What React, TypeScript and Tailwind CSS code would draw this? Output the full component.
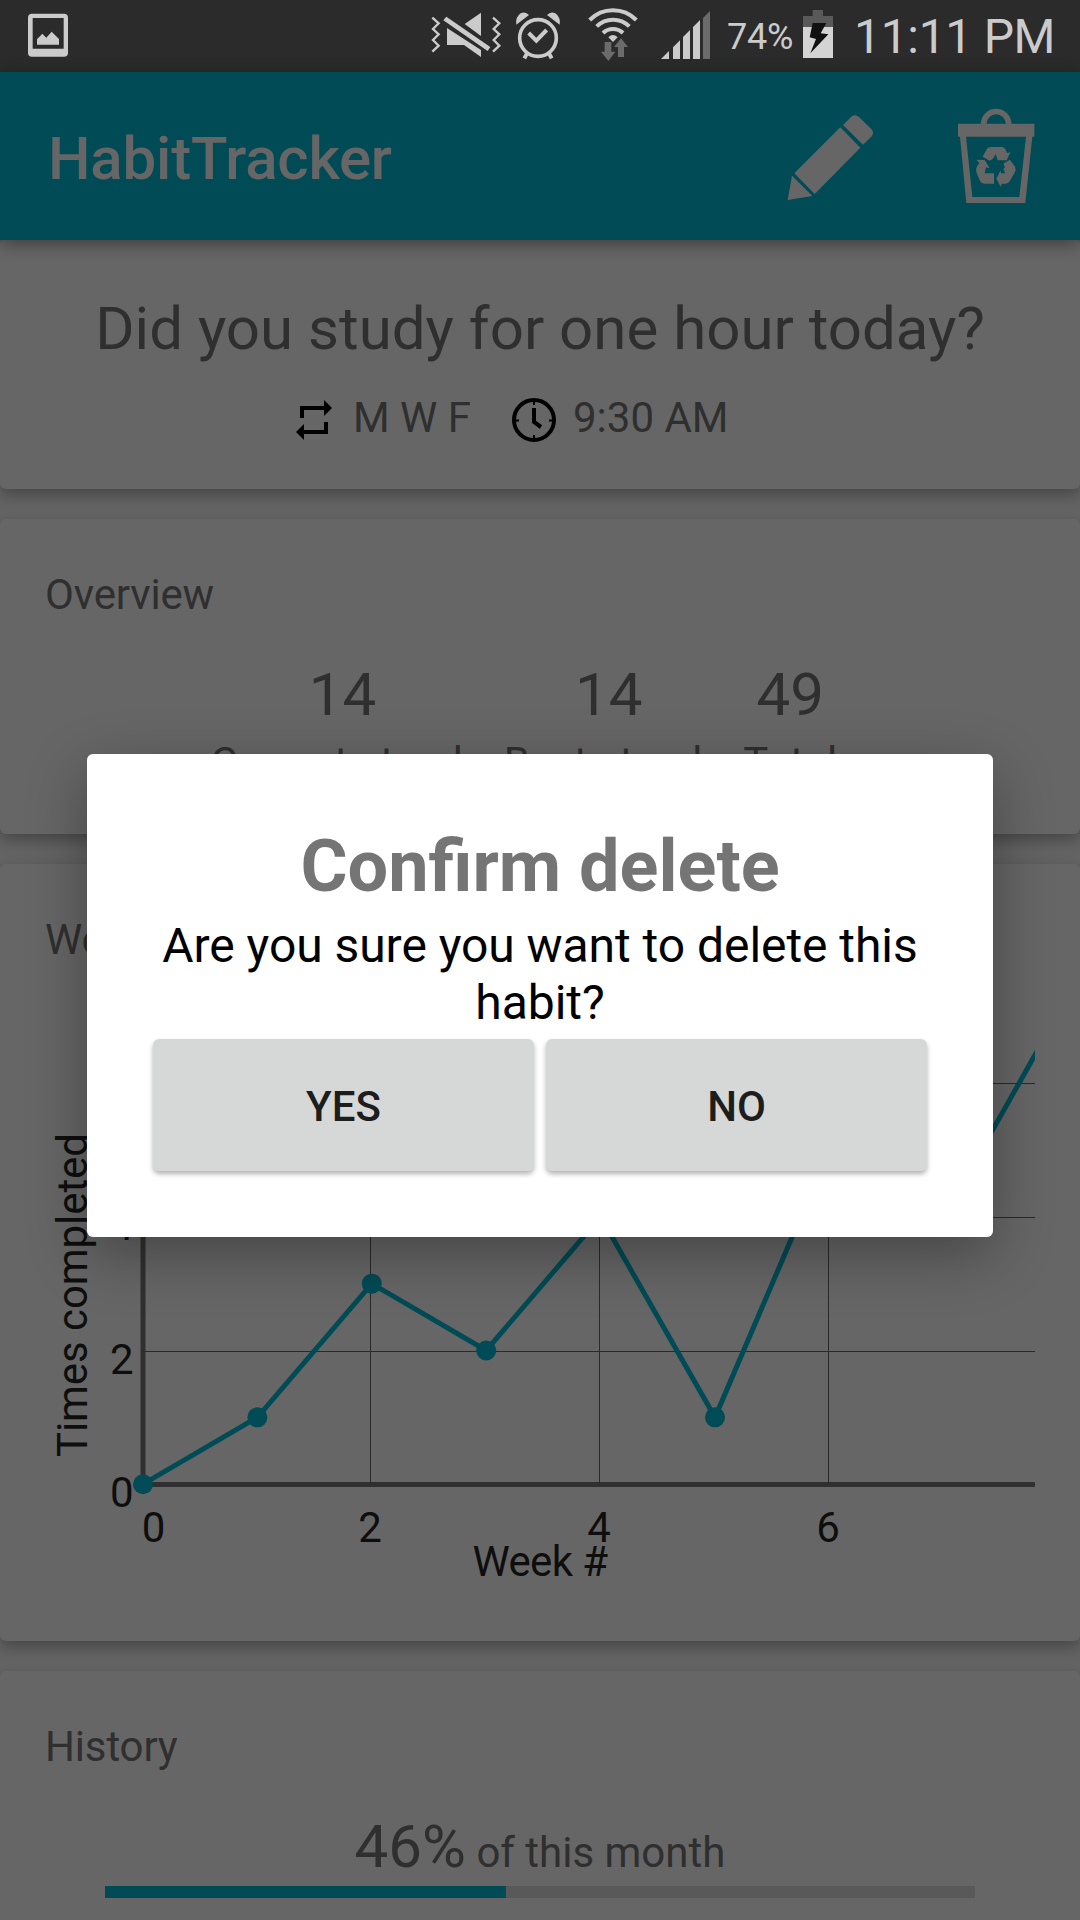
import type { ReactNode } from "react";

function StatusBar() {
  return (
    <div className="flex h-[72px] shrink-0 bg-[#2b2b2b] text-[#cbcbcb]">
      <svg className="ml-7 h-[72px] w-10 shrink-0" viewBox="84 0 120 216" fill="#cbcbcb">
        <path
          fillRule="evenodd"
          d="M96 41H192Q204 41 204 53V158Q204 170 192 170H96Q84 170 84 158V53Q84 41 96 41ZM98 54V146H191V54ZM111 118L127 101L139 113L155 95L177 117V134H111Z"
        />
      </svg>
      <svg className="ml-[363px] h-[72px] w-[70px] shrink-0" viewBox="33 0 210 216" fill="#cbcbcb">
        <path d="M183 38V108L134 72Z" />
        <path d="M81 84L183 150V171L132 135H81Z" />
        <path d="M79 50L211 141L203 153L70 61Z" />
        <g fill="none" stroke="#cbcbcb" strokeWidth="7">
          <path d="M37 53L56 70L39 87L56 103L39 120L56 137L37 155" />
          <path d="M219 53L238 70L221 87L238 103L221 120L238 137L219 155" />
        </g>
      </svg>
      <svg className="ml-[13px] h-[72px] w-12 shrink-0" viewBox="282 0 144 216" fill="none" stroke="#cbcbcb">
        <circle cx="354" cy="114" r="55" strokeWidth="11" />
        <path d="M326 99L349 122L380 90" strokeWidth="12" />
        <path d="M321 160L313 175M387 160L395 175" strokeWidth="12" />
        <path
          d="M289 74L327 45Q316 33 302 40Q285 52 289 74ZM419 74L381 45Q392 33 406 40Q423 52 419 74Z"
          fill="#cbcbcb"
          stroke="none"
        />
      </svg>
      <svg className="ml-[25px] h-[72px] w-[52px] shrink-0" viewBox="501 0 156 216" fill="none">
        <g stroke="#cbcbcb" strokeWidth="12">
          <path d="M509 60A98 98 0 0 1 649 60" />
          <path d="M530 79A70 70 0 0 1 628 79" />
          <path d="M549 99A43 43 0 0 1 609 99" />
        </g>
        <path d="M565 112Q579 98 593 112L579 126Z" fill="#cbcbcb" />
        <path
          d="M554 126H574V155H586L565 183L543 155H554ZM594 171V141H582L603 115L624 141H612V171Z"
          fill="#6b6b6b"
        />
      </svg>
      <svg className="ml-[21px] h-[72px] w-[51px] shrink-0" viewBox="720 0 153 216" fill="#cbcbcb">
        <path d="M723 177L747 153V177ZM759 177V142L780 121V177ZM789 177V111L810 90V177ZM819 177V81L840 60V177Z" />
        <path d="M849 177V54L870 33V177Z" fill="#6b6b6b" />
      </svg>
      <span className="ml-4 mt-4 w-[76px] shrink-0 text-[36px] leading-[42px] tracking-[-0.2px]">74%</span>
      <svg className="h-[72px] w-[30px] shrink-0" viewBox="249 0 90 216">
        <path d="M278 30H309V48H339V81H249V48H278Z" fill="#595959" />
        <path d="M249 81H339V174H249Z" fill="#d4d4d4" />
        <path d="M278 69H319L302 100L325 103L271 160L288 117L269 112Z" fill="#111111" />
      </svg>
      <span className="ml-[21px] mt-2 shrink-0 whitespace-nowrap text-[48px] leading-[57px] tracking-[-0.3px]">
        11:11 PM
      </span>
    </div>
  );
}

function AppBar() {
  return (
    <header className="relative z-10 flex h-[168px] shrink-0 bg-[#004b55] shadow-[0_4px_16px_rgba(0,0,0,0.4)]">
      <h1 className="ml-12 mt-[51px] w-[739px] text-[60px] font-medium leading-[71px] tracking-[-0.2px] text-[#666666]">
        HabitTracker
      </h1>
      <svg className="mt-[43px] h-[86px] w-[86px]" viewBox="111 105 258 258" fill="#666666">
        <path d="M279 135L304 110Q315 101 327 111L364 147Q374 158 364 170L339 194Z" />
        <path d="M271 142L331 203L194 342L133 280Z" />
        <path d="M126 287L187 348L113 360Z" />
      </svg>
      <svg className="ml-[85px] mt-[36px] h-[96px] w-[77px]" viewBox="624 84 231 288" fill="#666666">
        <path d="M701 133V132A37.500 37.500 0 0 1 776 132V133" fill="none" stroke="#666666" strokeWidth="17" />
        <path
          fillRule="evenodd"
          d="M624 131H853V170H847L826 369H649L630 170H624ZM648 170L667 351H808L828 170Z"
        />
        <path d="M698 230L710 208Q714 201 722 201H756Q763 202 767 209L771 219L781 217L770 241H743L737 222L728 237L719 242Z" />
        <path d="M679 239L704 240L719 265L708 262L704 280H732V311H704Q695 311 690 303L679 276Q676 267 682 257L688 249Z" />
        <path d="M780 239L795 260Q799 268 794 278L779 304Q775 311 766 311H755L752 320L739 296L751 272L754 280H766L760 268L765 262L760 251Z" />
      </svg>
    </header>
  );
}

function Card({ className, children }: { className: string; children: ReactNode }) {
  return (
    <section
      className={`relative shrink-0 rounded-[6px] bg-[#666666] shadow-[0_6px_15px_rgba(0,0,0,0.3)] ${className}`}
    >
      {children}
    </section>
  );
}

function CardTitle({ children }: { children: ReactNode }) {
  return <h2 className="ml-[45px] pt-[51px] text-[42px] leading-[49px] tracking-[-0.15px]">{children}</h2>;
}

function Stat({ value, label }: { value: string; label: string }) {
  return (
    <div className="flex flex-col items-center gap-2">
      <span className="text-[60px] leading-[71px]">{value}</span>
      <span className="text-[42px] leading-[49px]">{label}</span>
    </div>
  );
}

const weekly = [0, 1, 3, 2, 4, 1, 5, 4, 7.04];
const px = (week: number) => 143 + week * 114.4;
const py = (count: number) => 1484.2 - count * 66.85;

function WeeklyChart() {
  return (
    <svg className="block h-[640px] w-[1080px]" viewBox="0 964 1080 640">
      <defs>
        <clipPath id="plot">
          <rect x="120" y="964" width="915" height="540" />
        </clipPath>
      </defs>
      <path d="M143 1000V1484.500H1035" fill="none" stroke="#303030" strokeWidth="5" />
      <g stroke="#2a2a2a" strokeWidth="1">
        {[2, 4, 6].map((week) => (
          <line key={week} x1={141.5 + week * 114.5} x2={141.5 + week * 114.5} y1="1000" y2="1484" />
        ))}
        <line x1="142" x2="1035" y1="1083.500" y2="1083.500" />
        <line x1="142" x2="1035" y1="1217.500" y2="1217.500" />
        <line x1="142" x2="1035" y1="1351.500" y2="1351.500" />
      </g>
      <g clipPath="url(#plot)" fill="#004b55">
        <polyline
          points={weekly.map((count, week) => `${px(week)},${py(count)}`).join(" ")}
          fill="none"
          stroke="#004b55"
          strokeWidth="5"
        />
        {weekly.slice(0, 8).map((count, week) => (
          <circle key={week} cx={px(week)} cy={py(count)} r="10" />
        ))}
      </g>
      <g fill="#0e0e0e" fontSize="42">
        <g textAnchor="end">
          <text x="133.500" y="1507">0</text>
          <text x="133.500" y="1374">2</text>
          <text x="133.500" y="1240">4</text>
        </g>
        <g textAnchor="middle">
          <text x="153.500" y="1542">0</text>
          <text x="370" y="1542">2</text>
          <text x="599" y="1542">4</text>
          <text x="828" y="1542">6</text>
          <text x="540" y="1576" letterSpacing="-0.6">Week #</text>
        </g>
        <text transform="translate(87 1457) rotate(-90)" textLength="324">
          Times completed
        </text>
      </g>
    </svg>
  );
}

function ConfirmDialog() {
  return (
    <div className="absolute inset-0 z-20">
      <div
        role="dialog"
        className="ml-[87px] mt-[754px] h-[483px] w-[906px] rounded-[6px] bg-white px-[66px] pt-[70px] text-center shadow-[0_18px_60px_rgba(0,0,0,0.32)]"
      >
        <h2 className="text-[72px] font-bold leading-[85px] text-[#757575]">Confirm delete</h2>
        <p className="mt-[8px] text-[48px] leading-[57px] tracking-[-0.05px] text-black">
          Are you sure you want to delete this
          <br />
          habit?
        </p>
        <div className="mt-[8px] grid grid-cols-2 gap-3 text-[42px] font-medium leading-[49px] text-[#1d1d1d]">
          <button className="h-[132px] rounded-[6px] bg-[#d6d8d7] pt-[3px] shadow-[0_3px_5px_rgba(0,0,0,0.3)]">YES</button>
          <button className="h-[132px] rounded-[6px] bg-[#d6d8d7] pt-[3px] shadow-[0_3px_5px_rgba(0,0,0,0.3)]">NO</button>
        </div>
      </div>
    </div>
  );
}

export default function App() {
  return (
    <div className="relative flex h-[1920px] w-[1080px] flex-col overflow-hidden bg-[#646464] font-['Roboto',sans-serif] text-[#2f2f2f]">
      <StatusBar />
      <AppBar />
      <main className="flex flex-col">
        <Card className="h-[249px] pt-[53px]">
          <h2 className="text-center text-[60px] leading-[71px]">Did you study for one hour today?</h2>
          <div className="mt-[29px] flex text-[42px] leading-[49px]">
            <svg className="ml-[296px] mt-[7px] h-10 w-9" viewBox="0 0 36 40" fill="#000000">
              <path d="M4 18V6H28V0L36 8L28 16V10H8V18Z" />
              <path d="M32 22V34H8V40L0 32L8 24V30H28V22Z" />
            </svg>
            <span className="ml-[21px] w-[159px]">M W F</span>
            <svg className="mt-[5px] h-11 w-11" viewBox="0 0 44 44" fill="none" stroke="#000000">
              <circle cx="22" cy="22" r="20" strokeWidth="4" />
              <path d="M22 10V24L29 29" strokeWidth="4" />
              <path d="M22 1V7M22 37V43M1 22.500H7M37 22.500H43" strokeWidth="2" />
            </svg>
            <span className="ml-[17px]">9:30 AM</span>
          </div>
        </Card>
        <Card className="mt-[30px] h-[315px]">
          <CardTitle>Overview</CardTitle>
          <div className="ml-[210.5px] mt-10 flex gap-[29.5px]">
            <Stat value="14" label="Current streak" />
            <Stat value="14" label="Best streak" />
            <Stat value="49" label="Total" />
          </div>
        </Card>
        <Card className="mt-[30px] h-[777px]">
          <CardTitle>Weekly</CardTitle>
          <WeeklyChart />
        </Card>
        <Card className="mt-[30px] h-[300px]">
          <CardTitle>History</CardTitle>
          <p className="mt-10 h-[71px] text-center text-[60px] leading-[71px]">
            46%<span className="text-[42px]"> of this month</span>
          </p>
          <div className="mx-[105px] mt-1 h-3 bg-[#595959]">
            <div className="h-3 w-[401px] bg-[#004b55]" />
          </div>
        </Card>
      </main>
      <ConfirmDialog />
    </div>
  );
}
